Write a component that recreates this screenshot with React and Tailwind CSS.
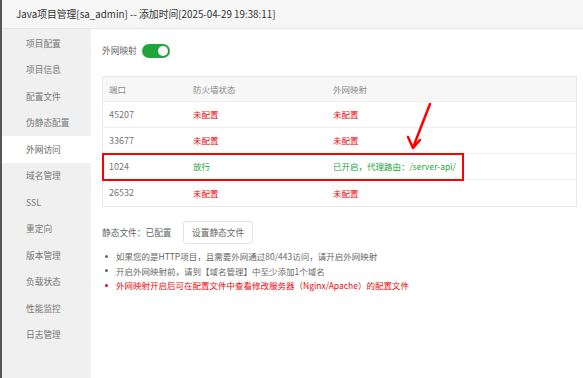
import { useState } from 'react'

// ── Sidebar + table data ─────────────────────────────────────
const MENU = ['项目配置', '项目信息', '配置文件', '伪静态配置', '外网访问', '域名管理', 'SSL', '重定向', '版本管理', '负载状态', '性能监控', '日志管理']

const PORTS = [
    { port: '45207', fw: '未配置', fwOk: false, map: '未配置', mapOk: false },
    { port: '33677', fw: '未配置', fwOk: false, map: '未配置', mapOk: false },
    { port: '1024', fw: '放行', fwOk: true, map: '已开启，代理路由：/server-api/', mapOk: true, marked: true },
    { port: '26532', fw: '未配置', fwOk: false, map: '未配置', mapOk: false },
]

const FONT = { fontFamily: '"Noto Sans CJK SC", "Noto Sans", sans-serif' }

export default function App() {
    const [active, setActive] = useState('外网访问')
    const [enabled, setEnabled] = useState(true)

    return (
        <div className="w-[583px] h-[378px] bg-white border-l-2 border-[#555] flex flex-col overflow-hidden text-[#555]" style={FONT}>
            {/* Title bar */}
            <div className="h-[29px] shrink-0 bg-[#f6f6f6] border-b border-[#e6e6e6] flex items-center pl-[14px] text-[9.8px] text-[#333]">
                Java项目管理[sa_admin] -- 添加时间[2025-04-29 19:38:11]
            </div>

            <div className="flex flex-1 min-h-0">
                {/* Sidebar */}
                <div className="w-[89px] shrink-0 bg-[#f0f0f0] pt-[1px]">
                    {MENU.map(item => (
                        <div
                            key={item}
                            onClick={() => setActive(item)}
                            className={`h-[26.5px] flex items-center pl-[24px] text-[8.7px] cursor-pointer ${
                                active === item ? 'bg-white text-[#666]' : 'text-[#777]'
                            }`}
                        >
                            {item}
                        </div>
                    ))}
                </div>

                {/* Content */}
                <div className="flex-1 pl-[11px] pr-[6px] pt-[14px]">
                    <div className="flex items-center gap-[5px] h-[15px]">
                        <span className="text-[8.7px] text-[#666]">外网映射</span>
                        <button
                            onClick={() => setEnabled(v => !v)}
                            className={`w-[28px] h-[14px] rounded-full flex items-center px-[2px] ${enabled ? 'bg-[#20a53a] justify-end' : 'bg-[#ccc] justify-start'}`}
                        >
                            <span className="w-[10px] h-[10px] rounded-full bg-white" />
                        </button>
                    </div>

                    {/* Port table */}
                    <div className="relative mt-[18px] border border-[#e8e8e8] text-[8.5px]">
                        <div className="flex h-[25px] items-center bg-[#f7f7f7] text-[#888] border-b border-[#eee]">
                            <div className="w-[90px] pl-[6px]">端口</div>
                            <div className="w-[140px]">防火墙状态</div>
                            <div className="flex-1">外网映射</div>
                        </div>
                        {PORTS.map((p, i) => (
                            <div
                                key={p.port}
                                className={`flex h-[26px] items-center ${i < PORTS.length - 1 ? 'border-b border-[#eee]' : ''} ${p.marked ? 'relative' : ''}`}
                            >
                                <div className="w-[90px] pl-[6px] text-[#777] text-[9px]">{p.port}</div>
                                <div className={`w-[140px] ${p.fwOk ? 'text-[#20a53a]' : 'text-[#ef0808]'}`}>{p.fw}</div>
                                <div className={`flex-1 ${p.mapOk ? 'text-[#20a53a]' : 'text-[#ef0808]'}`}>{p.map}</div>
                                {p.marked && (
                                    <div className="absolute left-[-1px] top-[-1px] w-[362px] h-[28px] border-[2.5px] border-[#f00] pointer-events-none" />
                                )}
                            </div>
                        ))}

                        {/* Annotation arrow */}
                        <svg className="absolute left-[300px] top-[25px] pointer-events-none" width="40" height="50" viewBox="0 0 40 50">
                            <path d="M27 2 L11 43" stroke="#f00" strokeWidth="2.5" strokeLinecap="round" fill="none" />
                            <path d="M5 35 L10 46 L17 38" stroke="#f00" strokeWidth="2.5" strokeLinecap="round" strokeLinejoin="round" fill="none" />
                        </svg>
                    </div>

                    {/* Static files */}
                    <div className="flex items-center mt-[14px] text-[8.7px]">
                        <span className="text-[#666] w-[81px]">静态文件：已配置</span>
                        <button className="h-[23px] px-[8px] border border-[#e3e3e3] rounded-[3px] bg-white text-[#666] text-[8.7px]">
                            设置静态文件
                        </button>
                    </div>

                    {/* Tips */}
                    <ul className="mt-[5px] text-[8.5px] leading-[14.5px] pl-[3px]">
                        <li className="flex items-center gap-[8px] text-[#666]">
                            <span className="w-[3px] h-[3px] rounded-full bg-[#666]" />
                            如果您的是HTTP项目，且需要外网通过80/443访问，请开启外网映射
                        </li>
                        <li className="flex items-center gap-[8px] text-[#666]">
                            <span className="w-[3px] h-[3px] rounded-full bg-[#666]" />
                            开启外网映射前，请到【域名管理】中至少添加1个域名
                        </li>
                        <li className="flex items-center gap-[8px] text-[#ef0808]">
                            <span className="w-[3px] h-[3px] rounded-full bg-[#ef0808]" />
                            外网映射开启后可在配置文件中查看修改服务器（Nginx/Apache）的配置文件
                        </li>
                    </ul>
                </div>
            </div>
        </div>
    )
}
